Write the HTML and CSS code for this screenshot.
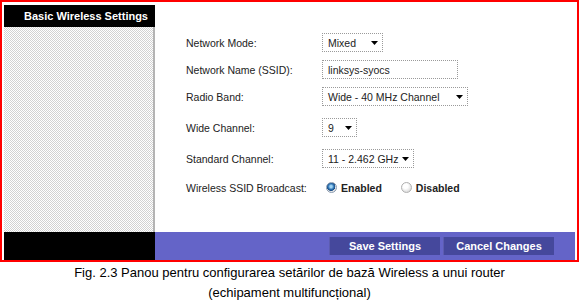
FILE: index.html
```html
<!DOCTYPE html>
<html lang="ro">
<head>
  <meta charset="UTF-8">
  <title>Basic Wireless Settings</title>
  <link rel="stylesheet" href="styles.css">
</head>
<body>
  <div class="panel">
    <div class="side">
      <div class="side-title">Basic Wireless Settings</div>
      <div class="side-fill"></div>
    </div>

    <div class="main">
      <div class="form">
        <div class="row">
          <span class="label">Network Mode:</span>
          <div class="select w-mode">Mixed
            <svg class="arrow" width="7" height="4" viewBox="0 0 7 4"><polygon points="0,0 7,0 3.5,4" fill="#000"/></svg>
          </div>
        </div>
        <div class="row gap-8">
          <span class="label">Network Name (SSID):</span>
          <div class="textbox">linksys-syocs</div>
        </div>
        <div class="row gap-8">
          <span class="label">Radio Band:</span>
          <div class="select w-band">Wide - 40 MHz Channel
            <svg class="arrow" width="7" height="4" viewBox="0 0 7 4"><polygon points="0,0 7,0 3.5,4" fill="#000"/></svg>
          </div>
        </div>
        <div class="row gap-12">
          <span class="label">Wide Channel:</span>
          <div class="select w-wide">9
            <svg class="arrow" width="7" height="4" viewBox="0 0 7 4"><polygon points="0,0 7,0 3.5,4" fill="#000"/></svg>
          </div>
        </div>
        <div class="row gap-12">
          <span class="label">Standard Channel:</span>
          <div class="select w-std">11 - 2.462 GHz
            <svg class="arrow" width="7" height="4" viewBox="0 0 7 4"><polygon points="0,0 7,0 3.5,4" fill="#000"/></svg>
          </div>
        </div>
        <div class="row gap-10">
          <span class="label">Wireless SSID Broadcast:</span>
          <div class="radios">
            <span class="radio checked"></span><span class="radio-text">Enabled</span>
            <span class="radio"></span><span class="radio-text">Disabled</span>
          </div>
        </div>
      </div>
    </div>

    <div class="foot-left"></div>
    <div class="foot-right">
      <button class="btn">Save Settings</button>
      <button class="btn">Cancel Changes</button>
    </div>
  </div>

  <p class="caption">Fig. 2.3 Panou pentru configurarea setărilor de bază Wireless a unui router<br>(echipament multifuncțional)</p>
</body>
</html>
```

FILE: styles.css
```css
body {
  margin: 0;
  background: #fff;
  font-family: "Liberation Sans", Arial, sans-serif;
}
.panel {
  box-sizing: border-box;
  width: 579px;
  height: 262px;
  border: 2px solid #f00;
  padding: 3px 2px 0 2px;
  display: grid;
  grid-template-columns: 151px 1fr;
  grid-template-rows: 227px 28px;
}
.side {
  display: flex;
  flex-direction: column;
}
.side-title {
  height: 22px;
  line-height: 22px;
  background: #000;
  color: #fff;
  font-weight: bold;
  font-size: 11px;
  text-align: right;
  padding-right: 7px;
}
.side-fill {
  flex: 1;
  background: repeating-conic-gradient(#d2d2d2 0 25%, #fff 0 50%) 0 0 / 2px 2px;
  border-right: 2px solid #b4b4b4;
}
.main {
  background: #fff;
}
.form {
  padding: 28px 0 0 31px;
  display: flex;
  flex-direction: column;
}
.row {
  display: flex;
  align-items: center;
  height: 19px;
}
.gap-8 { margin-top: 8px; }
.gap-10 { margin-top: 10px; }
.gap-12 { margin-top: 12px; }
.label {
  width: 136px;
  font-size: 10.5px;
  color: #222;
}
.select, .textbox {
  box-sizing: border-box;
  height: 19px;
  border: 1px dotted #9a9a9a;
  font-size: 10.5px;
  color: #222;
  display: flex;
  align-items: center;
  padding: 0 4px 0 5px;
}
.select {
  justify-content: space-between;
}
.w-mode { width: 61px; }
.w-band { width: 146px; }
.w-wide { width: 35px; }
.w-std { width: 92px; }
.textbox { width: 136px; }
.arrow {
  flex: none;
}
.radios {
  display: flex;
  align-items: center;
  padding-left: 4px;
}
.radio {
  box-sizing: border-box;
  width: 11px;
  height: 11px;
  border-radius: 50%;
  border: 1px solid #b0b0b0;
  background: radial-gradient(circle at 40% 35%, #fff 0 30%, #d8d8d8 80%);
}
.radio.checked {
  border-color: #8a9bb0;
  background: radial-gradient(circle at 45% 40%, #9fd4f5 0 15%, #2a6fb0 40%, #1d4f86 55%, #e6e6e6 62%);
}
.radio-text {
  font-size: 10.5px;
  font-weight: bold;
  color: #222;
  margin: 0 19px 0 4px;
}
.foot-left {
  background: #000;
}
.foot-right {
  background: #6464c8;
  display: flex;
  justify-content: flex-end;
  align-items: flex-start;
  gap: 3px;
  padding: 5px 21px 0 0;
}
.btn {
  width: 111px;
  height: 18px;
  border: none;
  border-left: 1px solid #5c5cb0;
  background: #45489c;
  color: #fff;
  font-family: "Liberation Sans", Arial, sans-serif;
  font-weight: bold;
  font-size: 11px;
  padding: 0;
}
.caption {
  margin: 1px 0 0;
  width: 579px;
  text-align: center;
  font-size: 13px;
  line-height: 20px;
  color: #000;
}
```
